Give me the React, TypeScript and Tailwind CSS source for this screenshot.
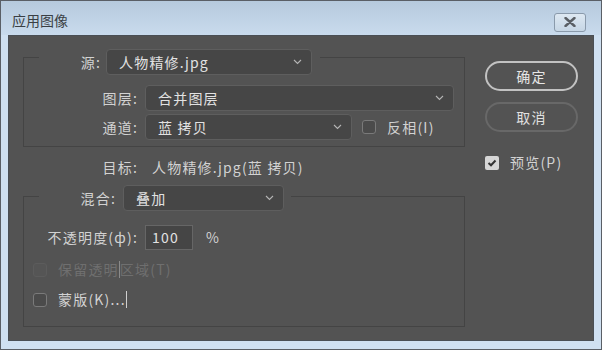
const font = { fontFamily: '"Noto Sans CJK SC", "Noto Sans", sans-serif' }

const Chevron = () => (
  <svg width="9" height="6" viewBox="0 0 9 6" className="shrink-0">
    <polyline points="1,1 4.5,4.5 8,1" fill="none" stroke="#b5b5b5" strokeWidth="1.1" />
  </svg>
)

type SelectProps = {
  value: string
  width: string
}

const Select = ({ value, width }: SelectProps) => (
  <div
    className={`${width} h-[26px] flex items-center justify-between rounded-[4px] border border-[#5e5e5e] bg-[#464646] pl-[12px] pr-[9px] text-[14px] text-[#e2e2e2]`}
  >
    <span>{value}</span>
    <Chevron />
  </div>
)

const Box = ({ checked = false, disabled = false }: { checked?: boolean; disabled?: boolean }) => {
  if (checked) {
    return (
      <div className="w-[14px] h-[14px] rounded-[2px] bg-[#d6d6d6] flex items-center justify-center">
        <svg width="10" height="8" viewBox="0 0 10 8">
          <polyline points="1.5,4 4,6.3 8.5,1.5" fill="none" stroke="#333" strokeWidth="2" />
        </svg>
      </div>
    )
  }
  return (
    <div
      className={`w-[14px] h-[14px] rounded-[3px] border ${
        disabled ? 'border-[#5c5c5c] bg-[#555555]' : 'border-[#7a7a7a] bg-[#4b4b4b]'
      }`}
    />
  )
}

const App = () => {
  return (
    <div
      className="w-[602px] h-[350px] border border-[#5a5f66] bg-[#cfe0f1] flex flex-col tracking-[1.2px]"
      style={font}
    >
      {/* title bar */}
      <div className="h-[34px] shrink-0 flex items-center justify-between bg-gradient-to-b from-[#b6cadd] to-[#c9dbed] pl-[11px] pr-[15px]">
        <span className="text-[14px] text-[#3a3f44] mt-[5px] tracking-normal">应用图像</span>
        <div className="mt-[8px] w-[32px] h-[19px] rounded-[3px] border border-[#8a9aab] bg-gradient-to-b from-[#dde8f2] to-[#c6d6e5] flex items-center justify-center">
          <svg width="12" height="10" viewBox="0 0 12 10">
            <path d="M1.5 1 L10.5 9 M10.5 1 L1.5 9" stroke="#5a5f65" strokeWidth="2.4" strokeLinecap="round" />
          </svg>
        </div>
      </div>

      {/* dark panel */}
      <div className="flex-1 mx-[7px] mb-[8px] border border-[#4a4f55] bg-[#535353] flex pl-[14px] pt-[21px] text-[14px] leading-[21px] text-[#d2d2d2]">
        <div className="w-[442px] flex flex-col">
          {/* source group */}
          <div className="border border-[#444444] pb-[6px]">
            <div className="-mt-[9px] ml-[15px] w-[281px] flex items-center bg-[#535353]">
              <span className="w-[62px] text-right">源:</span>
              <div className="ml-[5px]">
                <Select value="人物精修.jpg" width="w-[206px]" />
              </div>
            </div>
            <div className="mt-[10px] flex items-center">
              <span className="w-[114px] text-right">图层:</span>
              <div className="ml-[7px]">
                <Select value="合并图层" width="w-[309px]" />
              </div>
            </div>
            <div className="mt-[3px] flex items-center">
              <span className="w-[114px] text-right">通道:</span>
              <div className="ml-[7px]">
                <Select value="蓝 拷贝" width="w-[207px]" />
              </div>
              <div className="ml-[10px]">
                <Box />
              </div>
              <span className="ml-[11px]">反相(I)</span>
            </div>
          </div>

          <div className="mt-[10px] flex items-center">
            <span className="w-[115px] text-right">目标:</span>
            <span className="ml-[14px]">人物精修.jpg(蓝 拷贝)</span>
          </div>

          {/* blend group */}
          <div className="mt-[18px] h-[131px] border border-[#444444]">
            <div className="-mt-[12px] ml-[15px] w-[252px] flex items-center bg-[#535353]">
              <span className="w-[77px] text-right">混合:</span>
              <div className="ml-[7px]">
                <Select value="叠加" width="w-[161px]" />
              </div>
            </div>
            <div className="mt-[14px] flex items-center">
              <span className="w-[114px] text-right">不透明度(ф):</span>
              <div className="ml-[7px] w-[48px] h-[25px] border border-[#666666] bg-[#454545] flex items-center pl-[6px] text-[#e2e2e2]">
                100
              </div>
              <span className="ml-[13px]">%</span>
            </div>
            <div className="mt-[9px] flex items-center pl-[9px] text-[#6f6f6f]">
              <Box disabled />
              <span className="ml-[11px] flex items-center">
                保留透明
                <span className="w-[1px] h-[17px] bg-[#8a8a8a]" />
                区域(T)
              </span>
            </div>
            <div className="mt-[9px] flex items-center pl-[9px]">
              <Box />
              <span className="ml-[11px] flex items-center">
                蒙版(K)...
                <span className="w-[1px] h-[17px] bg-[#cfcfcf]" />
              </span>
            </div>
          </div>
        </div>

        {/* buttons */}
        <div className="ml-[20px] flex flex-col pt-[4px]">
          <div className="w-[93px] h-[30px] rounded-full border-2 border-[#c2c2c2] flex items-center justify-center text-[#e6e6e6]">
            确定
          </div>
          <div className="mt-[11px] w-[93px] h-[30px] rounded-full border-2 border-[#686868] flex items-center justify-center text-[#e0e0e0]">
            取消
          </div>
          <div className="mt-[20px] flex items-center">
            <Box checked />
            <span className="ml-[11px]">预览(P)</span>
          </div>
        </div>
      </div>
    </div>
  )
}

export default App
